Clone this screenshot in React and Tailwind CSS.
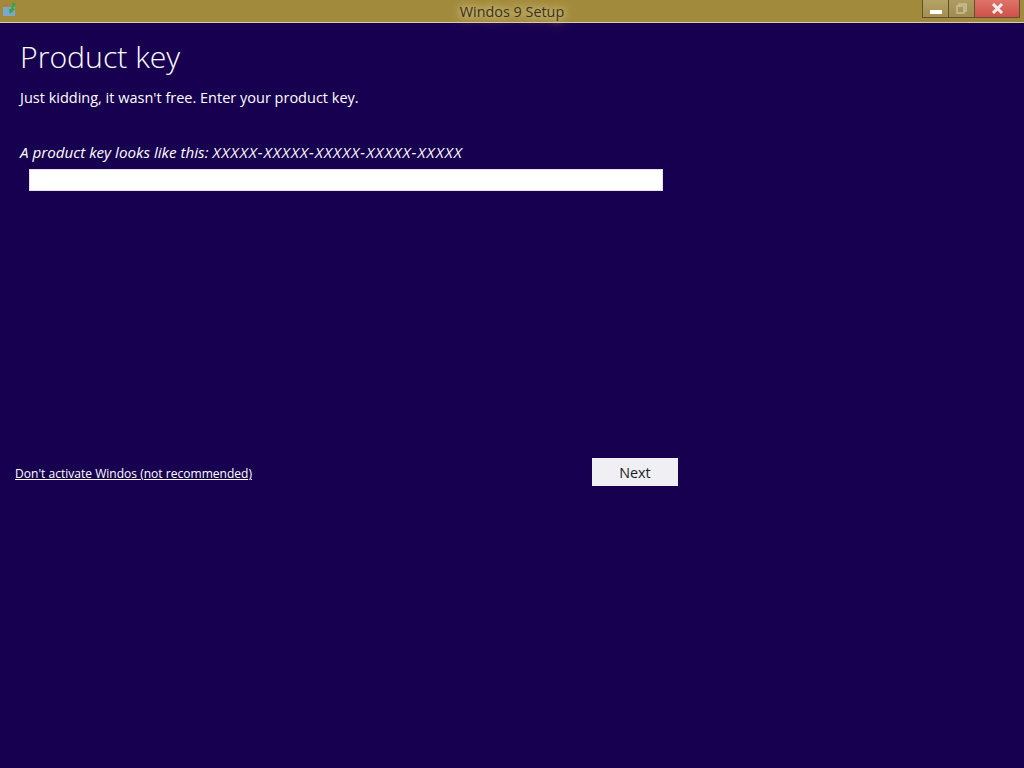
export default function App() {
  return (
    <div className="w-[1024px] h-[768px] overflow-hidden flex flex-col bg-[#180050] text-white font-['Open_Sans','Noto_Sans',sans-serif]">
      <header className="h-[23px] shrink-0 flex bg-[#a28a3c] border-b border-[#d8cfa8]">
        <div className="w-[20px] h-[22px] pl-[3px] pt-[2px] shrink-0">
          <svg width="15" height="14" viewBox="0 0 15 14">
            <rect x="0" y="5" width="12" height="9" fill="#7ea6c8" />
            <path d="M0 3 L5 2 L5 3 L0 4 Z" fill="#c9634a" />
            <path d="M10 0 L13 2 L10 6 L12 7 L7 12 L6 7 L8 7 Z" fill="#2fa84a" />
          </svg>
        </div>
        <div className="flex-1 flex justify-center pl-[82px]">
          <span className="text-[14.4px] leading-[23px] text-[#3a3120] [text-shadow:0_0_6px_#d4c78e,0_0_10px_#d4c78e,0_0_14px_#c9b878]">Windos 9 Setup</span>
        </div>
        <div className="flex h-[18px] mr-[4px] shrink-0">
          <div className="w-[27px] flex items-end justify-center pb-[3px] bg-gradient-to-b from-[#b5a266] to-[#a38f50] border border-t-0 border-[#5f5230]">
            <span className="block w-[12px] h-[4px] bg-white" />
          </div>
          <div className="w-[26px] flex items-center justify-center bg-gradient-to-b from-[#ad9b62] to-[#a08c4e] border-b border-r border-[#5f5230]">
            <svg width="11" height="11" viewBox="0 0 11 11" fill="none" stroke="#c9bf95" strokeWidth="1.5">
              <rect x="1" y="3" width="7" height="7" />
              <path d="M3 3 V1 H10 V8 H8" />
            </svg>
          </div>
          <div className="w-[45px] flex items-center justify-center bg-gradient-to-b from-[#e0736a] to-[#cf5148] border-b border-r border-[#6b4a30]">
            <svg width="13" height="11" viewBox="0 0 13 11" stroke="#f4eeee" strokeWidth="3">
              <path d="M2 1 L11 10 M11 1 L2 10" />
            </svg>
          </div>
        </div>
      </header>
      <main className="flex-1 flex flex-col pl-[15px]">
        <h1 className="pl-[5px] mt-[12px] text-[30.2px] leading-[43px] font-light">Product key</h1>
        <p className="pl-[5px] mt-[9px] text-[14.5px] leading-[22px]">Just kidding, it wasn't free. Enter your product key.</p>
        <p className="pl-[5px] mt-[32px] text-[15.2px] leading-[22px] italic">A product key looks like this: <span className="tracking-[1.14px]">XXXXX-XXXXX-XXXXX-XXXXX-XXXXX</span></p>
        <input className="ml-[14px] mt-[6px] w-[634px] h-[22px] bg-white border border-[#e4def0] outline-none" />
        <div className="w-[663px] mt-[267px] flex items-center justify-between">
          <a className="text-[12.05px] leading-[18px] underline mt-[4px]">Don't activate Windos (not recommended)</a>
          <button className="w-[86px] h-[28px] pt-[1px] bg-[#f0f0f4] text-[#1c1c1c] text-[14.3px]">Next</button>
        </div>
      </main>
    </div>
  );
}
